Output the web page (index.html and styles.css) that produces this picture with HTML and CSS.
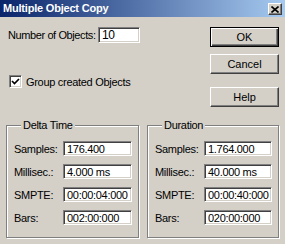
FILE: index.html
```html
<!DOCTYPE html>
<html>
<head>
<meta charset="utf-8">
<link rel="stylesheet" href="styles.css">
</head>
<body>
<div class="window">
  <div class="titlebar">
    <span class="title">Multiple Object Copy</span>
    <span class="close"><svg width="8" height="7" viewBox="0 0 8 7"><path d="M0.5 0.5 L7.5 6.5 M7.5 0.5 L0.5 6.5" stroke="#000" stroke-width="1.6" fill="none"/></svg></span>
  </div>
  <div class="content">
    <div class="top">
      <div class="top-left">
        <div class="num-row">
          <span class="num-label">Number of Objects:</span>
          <span class="edit num-edit">10</span>
        </div>
        <div class="check-row">
          <span class="checkbox"><svg width="9" height="9" viewBox="0 0 9 9"><path d="M1 4 L3.5 6.5 L8 2" stroke="#000" stroke-width="1.7" fill="none"/></svg></span>
          <span>Group created Objects</span>
        </div>
      </div>
      <div class="buttons">
        <div class="btn default">OK</div>
        <div class="btn">Cancel</div>
        <div class="btn help">Help</div>
      </div>
    </div>
    <div class="groups">
      <fieldset class="group">
        <legend>Delta Time</legend>
        <div class="field"><span class="flabel">Samples:</span><span class="edit">176.400</span></div>
        <div class="field"><span class="flabel">Millisec.:</span><span class="edit">4.000 ms</span></div>
        <div class="field"><span class="flabel">SMPTE:</span><span class="edit">00:00:04:000</span></div>
        <div class="field"><span class="flabel">Bars:</span><span class="edit">002:00:000</span></div>
      </fieldset>
      <fieldset class="group right">
        <legend>Duration</legend>
        <div class="field"><span class="flabel">Samples:</span><span class="edit">1.764.000</span></div>
        <div class="field"><span class="flabel">Millisec.:</span><span class="edit">40.000 ms</span></div>
        <div class="field"><span class="flabel">SMPTE:</span><span class="edit">00:00:40:000</span></div>
        <div class="field"><span class="flabel">Bars:</span><span class="edit">020:00:000</span></div>
      </fieldset>
    </div>
  </div>
</div>
</body>
</html>
```

FILE: styles.css
```css
html, body {
  margin: 0;
  padding: 0;
}
body {
  width: 285px;
  height: 244px;
  background: #d4d0c8;
  font-family: "Liberation Sans", Arial, sans-serif;
  font-size: 11px;
  color: #000;
  overflow: hidden;
}
.window {
  width: 285px;
  height: 244px;
}
.titlebar {
  height: 17px;
  background: linear-gradient(to right, #0a246a, #a6caf0);
  display: flex;
  align-items: center;
  justify-content: space-between;
  padding: 0 3px 0 3px;
}
.title {
  color: #fff;
  font-weight: bold;
  font-size: 11px;
  letter-spacing: -0.2px;
  line-height: 17px;
}
.close {
  width: 14px;
  height: 12px;
  box-sizing: border-box;
  background: #d4d0c8;
  border: 1px solid;
  border-color: #fff #404040 #404040 #fff;
  box-shadow: inset -1px -1px 0 #808080;
  display: flex;
  align-items: center;
  justify-content: center;
  margin-top: 1px;
}
.close svg {
  display: block;
}
.content {
  padding: 10px 6px 0 6px;
}
.top {
  display: flex;
  justify-content: space-between;
}
.top-left {
  padding-left: 2px;
}
.num-row {
  display: flex;
  align-items: center;
  height: 16px;
}
.num-label {
  width: 90px;
  letter-spacing: -0.4px;
}
.edit {
  display: flex;
  align-items: center;
  box-sizing: border-box;
  background: #fff;
  border: 1px solid;
  border-color: #808080 #fff #fff #808080;
  box-shadow: inset 1px 1px 0 #404040, inset -1px -1px 0 #d4d0c8;
  padding-left: 3px;
  height: 15px;
  white-space: nowrap;
  overflow: hidden;
  letter-spacing: -0.3px;
}
.num-edit {
  width: 42px;
  height: 16px;
  font-size: 12px;
}
.check-row {
  display: flex;
  align-items: center;
  margin-top: 32px;
  padding-left: 1px;
  letter-spacing: -0.3px;
}
.checkbox {
  width: 13px;
  height: 13px;
  box-sizing: border-box;
  background: #fff;
  border: 1px solid;
  border-color: #808080 #fff #fff #808080;
  box-shadow: inset 1px 1px 0 #404040, inset -1px -1px 0 #d4d0c8;
  display: flex;
  align-items: center;
  justify-content: center;
  margin-right: 4px;
}
.checkbox svg {
  display: block;
}
.buttons {
  display: flex;
  flex-direction: column;
  width: 69px;
}
.btn {
  height: 20px;
  box-sizing: border-box;
  border: 1px solid;
  border-color: #fff #404040 #404040 #fff;
  box-shadow: inset -1px -1px 0 #808080;
  display: flex;
  align-items: center;
  justify-content: center;
  margin-bottom: 7px;
}
.btn.default {
  border-color: #000;
  box-shadow: inset 1px 1px 0 #fff, inset -1px -1px 0 #404040, inset -2px -2px 0 #808080;
}
.btn.help {
  margin-top: 6px;
  margin-bottom: 0;
}
.groups {
  display: flex;
  gap: 8px;
  margin-top: 12px;
}
.group {
  margin: 0;
  min-width: 0;
  width: 134px;
  box-sizing: border-box;
  border: 1px solid #808080;
  box-shadow: 1px 1px 0 #fff, inset 1px 1px 0 #fff;
  padding: 9px 6px 12px 7px;
}
.group.right {
  width: 133px;
}
.group legend {
  padding: 0 2px;
  margin-left: 7px;
  line-height: 13px;
  background: #d4d0c8;
  letter-spacing: -0.3px;
}
.field {
  display: flex;
  align-items: center;
  height: 15px;
  margin-bottom: 8px;
}
.field:last-child {
  margin-bottom: 0;
}
.flabel {
  width: 49px;
  flex: none;
  letter-spacing: -0.3px;
}
.field .edit {
  flex: 1;
}
```
